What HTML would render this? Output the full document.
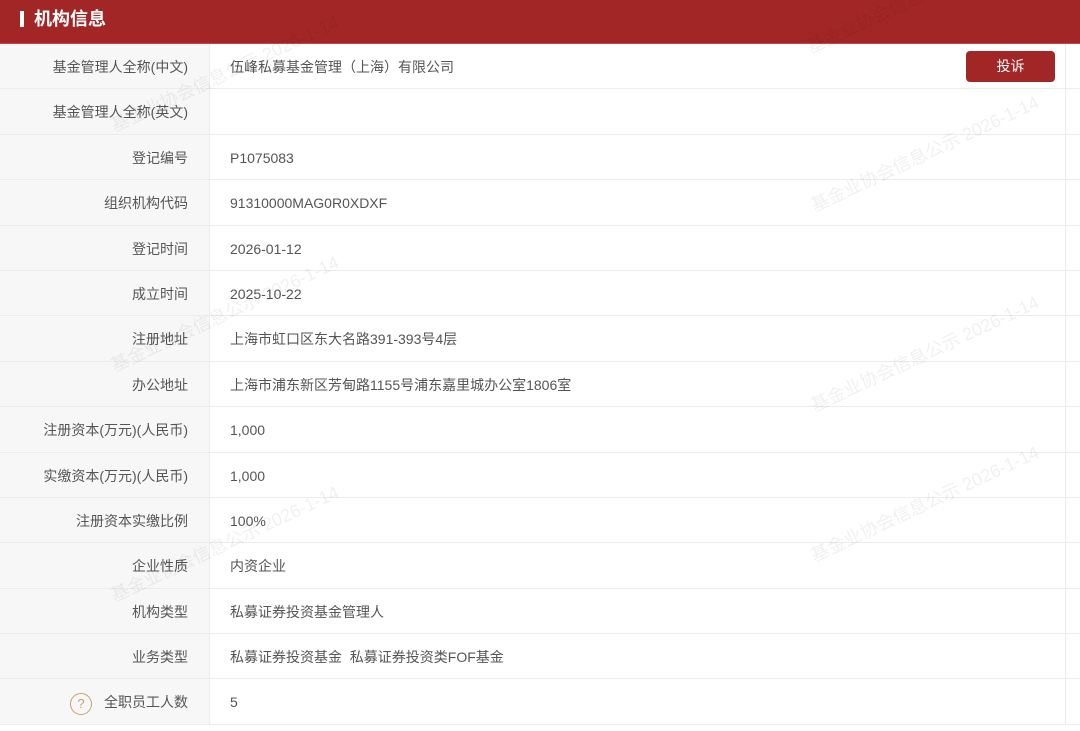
<!DOCTYPE html><html><head><meta charset="utf-8"><style>
body{margin:0;width:1080px;height:731px;overflow:hidden;background:#fff;font-family:"Liberation Sans","Noto Sans CJK SC",sans-serif;position:relative}
.hd{height:44px;background:#a32626;color:#fff;font-size:18px;font-weight:bold;line-height:38px;padding-left:20px;box-sizing:border-box;border-bottom:1px solid #c44}
.hd i{display:inline-block;width:4px;height:16px;background:#fff;vertical-align:-2px;margin-right:10px}
.row{height:45.4px;display:flex;border-bottom:1px solid #ececec;box-sizing:border-box;font-size:14px;color:#555}
.l{width:210px;background:#f7f7f7;border-right:1px solid #ececec;text-align:right;padding-right:21px;box-sizing:border-box;line-height:46px;color:#555}
.v{flex:1;padding-left:20px;line-height:46px;border-right:1px solid #ececec;margin-right:14px;position:relative}
.btn{position:absolute;right:10px;top:7px;width:89px;height:31px;background:#a32626;color:#fff;border-radius:4px;text-align:center;line-height:31px;font-size:14px}
.q{display:inline-block;width:20px;height:20px;border:1.5px solid #c9a06c;border-radius:50%;color:#c9a06c;font-size:13px;line-height:20px;text-align:center;vertical-align:middle;margin-right:12px}
.wm{position:absolute;color:rgba(0,0,0,0.06);font-size:18px;transform:rotate(-25deg);white-space:nowrap;pointer-events:none}
</style></head><body>
<div class="hd"><i></i>机构信息</div>
<div class="row"><div class="l">基金管理人全称(中文)</div><div class="v">伍峰私募基金管理（上海）有限公司<div class="btn">投诉</div></div></div>
<div class="row"><div class="l">基金管理人全称(英文)</div><div class="v"></div></div>
<div class="row"><div class="l">登记编号</div><div class="v">P1075083</div></div>
<div class="row"><div class="l">组织机构代码</div><div class="v">91310000MAG0R0XDXF</div></div>
<div class="row"><div class="l">登记时间</div><div class="v">2026-01-12</div></div>
<div class="row"><div class="l">成立时间</div><div class="v">2025-10-22</div></div>
<div class="row"><div class="l">注册地址</div><div class="v">上海市虹口区东大名路391-393号4层</div></div>
<div class="row"><div class="l">办公地址</div><div class="v">上海市浦东新区芳甸路1155号浦东嘉里城办公室1806室</div></div>
<div class="row"><div class="l">注册资本(万元)(人民币)</div><div class="v">1,000</div></div>
<div class="row"><div class="l">实缴资本(万元)(人民币)</div><div class="v">1,000</div></div>
<div class="row"><div class="l">注册资本实缴比例</div><div class="v">100%</div></div>
<div class="row"><div class="l">企业性质</div><div class="v">内资企业</div></div>
<div class="row"><div class="l">机构类型</div><div class="v">私募证券投资基金管理人</div></div>
<div class="row"><div class="l">业务类型</div><div class="v">私募证券投资基金&nbsp;&nbsp;私募证券投资类FOF基金</div></div>
<div class="row"><div class="l"><span class="q">?</span>全职员工人数</div><div class="v">5</div></div>
<div class="wm" style="left:100px;top:60px">基金业协会信息公示 2026-1-14</div>
<div class="wm" style="left:100px;top:300px">基金业协会信息公示 2026-1-14</div>
<div class="wm" style="left:100px;top:530px">基金业协会信息公示 2026-1-14</div>
<div class="wm" style="left:800px;top:140px">基金业协会信息公示 2026-1-14</div>
<div class="wm" style="left:800px;top:340px">基金业协会信息公示 2026-1-14</div>
<div class="wm" style="left:800px;top:490px">基金业协会信息公示 2026-1-14</div>
<div class="wm" style="left:800px;top:0px">基金业协会信息公示</div>
</body></html>
